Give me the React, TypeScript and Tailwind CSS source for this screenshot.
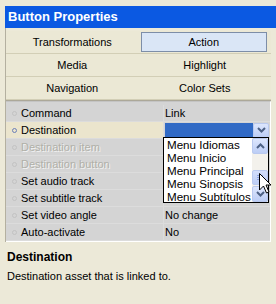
import React from "react";

const rows: { label: string; value: string; disabled?: boolean; active?: boolean }[] = [
  { label: "Command", value: "Link" },
  { label: "Destination", value: "", active: true },
  { label: "Destination item", value: "", disabled: true },
  { label: "Destination button", value: "", disabled: true },
  { label: "Set audio track", value: "" },
  { label: "Set subtitle track", value: "" },
  { label: "Set video angle", value: "No change" },
  { label: "Auto-activate", value: "No" },
];

const tabs = ["Transformations", "Action", "Media", "Highlight", "Navigation", "Color Sets"];

function Chevron({ up = false }: { up?: boolean }) {
  return (
    <svg width="9" height="6" viewBox="0 0 9 6">
      <path
        d={up ? "M1 5 L4.5 1.5 L8 5" : "M1 1 L4.5 4.5 L8 1"}
        fill="none"
        stroke="#4d6185"
        strokeWidth="2"
      />
    </svg>
  );
}

function XpButton({ up = false, className = "" }: { up?: boolean; className?: string }) {
  return (
    <div
      className={
        "flex items-center justify-center rounded-[2px] border border-[#b9c9ef] bg-gradient-to-b from-[#dde6fd] to-[#bccdf5] " +
        className
      }
    >
      <Chevron up={up} />
    </div>
  );
}

export default function App() {
  return (
    <div
      className="relative w-[276px] h-[304px] overflow-hidden bg-[#ece9d8] pt-[6px] text-[11px] text-black"
      style={{ fontFamily: '"Liberation Sans", Arial, sans-serif' }}
    >
      {/* Title bar */}
      <div className="ml-[5px] h-[22px] bg-[#0b59e2] flex items-center pl-[3px] text-white font-bold text-[13px]">
        Button Properties
      </div>

      <div className="ml-[5px] mr-[5px] border-l border-[#b4b0a0]">
        <div className="h-[3px]" />
        {/* Tabs */}
        <div className="grid grid-cols-2">
          {tabs.map((t) => {
            const sel = t === "Action";
            return (
              <div key={t} className="h-[23px] flex items-center justify-center border-b border-[#d2ceb6] bg-[#ebe8d5]">
                {sel ? (
                  <div className="ml-[2px] mr-[4px] w-full h-[20px] flex items-center justify-center bg-[#dae6f6] border border-[#7d8ea8]">
                    {t}
                  </div>
                ) : (
                  t
                )}
              </div>
            );
          })}
        </div>
        <div className="h-[1px] bg-[#aca899]" />

        {/* Property list */}
        <div className="bg-[#d4d4d4] border-t border-[#c4c4c4] border-r border-b border-r-white border-b-white pt-[3px]">
          {rows.map((r) => (
            <div
              key={r.label}
              className={
                "h-[17px] flex items-center border-b border-[#dcdcdc] " + (r.active ? "bg-[#ebe5cd]" : "")
              }
            >
              <div className="w-[14px] flex justify-center pl-[2px]">
                <div
                  className={
                    "w-[5px] h-[5px] rounded-full border " +
                    (r.active ? "border-[#6b7fb8]" : "border-[#c2c2c2]")
                  }
                />
              </div>
              <div
                className={
                  "w-[143px] pl-[1px] whitespace-nowrap " +
                  (r.disabled ? "text-[#b0b0a8] [text-shadow:1px_1px_0_#f2f2f2]" : "")
                }
              >
                {r.label}
              </div>
              <div className="flex-1 h-full flex items-center border-l border-[#dcdcdc] pl-[1px] bg-[#d4d4d4]">
                {r.active ? (
                  <div className="flex-1 h-[15px] flex mr-[1px]">
                    <div className="flex-1 bg-[#316ac5]" />
                    <XpButton className="w-[16px]" />
                  </div>
                ) : (
                  <span className="whitespace-nowrap">{r.value}</span>
                )}
              </div>
            </div>
          ))}
        </div>
      </div>

      {/* Description */}
      <div className="pl-[7px] pt-[8px]">
        <div className="font-bold text-[12px] leading-[15px]">Destination</div>
        <div className="mt-[4px] leading-[14px]">Destination asset that is linked to.</div>
      </div>

      {/* Dropdown list overlay */}
      <div className="absolute left-[163px] top-[137px] w-[106px] h-[66px] bg-white border border-black flex">
        <div className="flex-1 pl-[3px] text-[11.6px] leading-[13px] whitespace-nowrap">
          <div>Menu Idiomas</div>
          <div>Menu Inicio</div>
          <div>Menu Principal</div>
          <div>Menu Sinopsis</div>
          <div>Menu Subtítulos</div>
        </div>
        <div className="w-[16px] flex flex-col bg-[#f3f1ec]">
          <XpButton up className="h-[16px]" />
          <div className="flex-1 flex flex-col justify-end">
            <div className="h-[15px] mb-[1px] rounded-[2px] border border-[#b9c9ef] bg-gradient-to-b from-[#d3defb] to-[#bccdf5] flex flex-col items-center justify-center gap-[1px]">
              <div className="w-[6px] h-[1px] bg-[#8ea4e0]" />
              <div className="w-[6px] h-[1px] bg-[#8ea4e0]" />
              <div className="w-[6px] h-[1px] bg-[#8ea4e0]" />
            </div>
          </div>
          <XpButton className="h-[16px]" />
        </div>
      </div>

      {/* Mouse cursor */}
      <svg className="absolute left-[259px] top-[173px]" width="13" height="22" viewBox="0 0 13 22">
        <path
          d="M0.5 0.5 L0.5 17 L4.5 13 L7.5 20 L10 19 L7 12 L12 12 Z"
          fill="white"
          stroke="black"
          strokeWidth="1"
          strokeLinejoin="miter"
        />
      </svg>
    </div>
  );
}
